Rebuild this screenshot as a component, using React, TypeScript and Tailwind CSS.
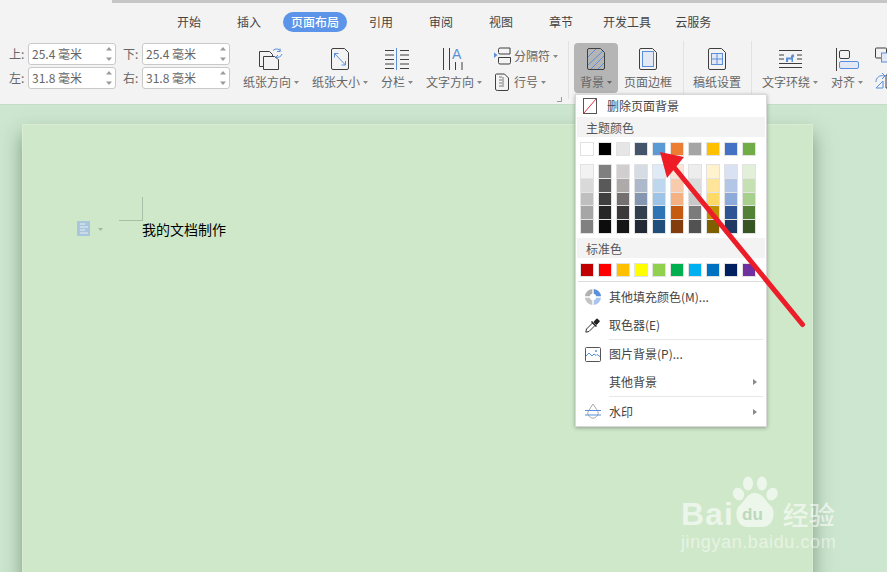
import React from "react";

const FONT = "[font-family:'Noto_Sans_CJK_SC','Noto_Sans',sans-serif]";

const themeRow = ["bg-[#ffffff]","bg-[#000000]","bg-[#e7e6e6]","bg-[#44546a]","bg-[#5b9bd5]","bg-[#ed7d31]","bg-[#a5a5a5]","bg-[#ffc000]","bg-[#4472c4]","bg-[#70ad47]"];
const shades = [
  ["bg-[#f2f2f2]","bg-[#d9d9d9]","bg-[#bfbfbf]","bg-[#a6a6a6]","bg-[#808080]"],
  ["bg-[#7f7f7f]","bg-[#595959]","bg-[#3f3f3f]","bg-[#262626]","bg-[#0d0d0d]"],
  ["bg-[#d0cece]","bg-[#aeaaaa]","bg-[#757070]","bg-[#3a3838]","bg-[#171616]"],
  ["bg-[#d6dce4]","bg-[#adb9ca]","bg-[#8496b0]","bg-[#323f4f]","bg-[#222a35]"],
  ["bg-[#deebf6]","bg-[#bdd7ee]","bg-[#9dc3e6]","bg-[#2e75b5]","bg-[#1e4e79]"],
  ["bg-[#fbe5d5]","bg-[#f7cbac]","bg-[#f4b183]","bg-[#c55a11]","bg-[#833c0b]"],
  ["bg-[#ededed]","bg-[#dbdbdb]","bg-[#c9c9c9]","bg-[#7b7b7b]","bg-[#525252]"],
  ["bg-[#fff2cc]","bg-[#fee599]","bg-[#ffd965]","bg-[#bf8f00]","bg-[#7f6000]"],
  ["bg-[#d9e2f3]","bg-[#b4c6e7]","bg-[#8eaadb]","bg-[#2f5496]","bg-[#1f3864]"],
  ["bg-[#e2efd9]","bg-[#c5e0b3]","bg-[#a8d08d]","bg-[#538135]","bg-[#375623]"],
];
const standard = ["bg-[#c00000]","bg-[#ff0000]","bg-[#ffc000]","bg-[#ffff00]","bg-[#92d050]","bg-[#00b050]","bg-[#00b0f0]","bg-[#0070c0]","bg-[#002060]","bg-[#7030a0]"];

const tabs: [string, string][] = [
  ["开始", "ml-[177px]"],
  ["插入", "ml-[36px]"],
  ["页面布局", "ml-[22px] h-[20px] px-2 rounded-full bg-[#5b94e8] text-white font-medium flex items-center"],
  ["引用", "ml-[22px]"],
  ["审阅", "ml-[36px]"],
  ["视图", "ml-[36px]"],
  ["章节", "ml-[36px]"],
  ["开发工具", "ml-[30px]"],
  ["云服务", "ml-[24px]"],
];

const Caret = ({ c = "#888" }: { c?: string }) => (
  <svg width="5" height="3" viewBox="0 0 5 3" className="ml-[3px] shrink-0"><path d="M0 0h5L2.5 3z" fill={c} /></svg>
);

const MarginField = ({ label, value }: { label: string; value: string }) => (
  <div className="flex items-center h-[21px]">
    <span className="w-[19px] text-[12px] text-[#666]">{label}</span>
    <div className="w-[88px] h-[22px] bg-white border border-[#c9c9c9] rounded-[3px] flex items-center justify-between pl-[3px] pr-[3px]">
      <span className="text-[12px] text-[#666] whitespace-nowrap">{value}</span>
      <svg width="6" height="16" viewBox="0 0 6 16"><path d="M0 4.5 3 1l3 3.5zM0 11.500h6L3 15z" fill="#9a9a9a" /></svg>
    </div>
  </div>
);

const S = "#3f3f3f";
const B = "#5b8fd9";

const Page = ({ x, y, w, h }: { x: number; y: number; w: number; h: number }) => (
  <path d={`M${x + 1.5} ${y}H${x + w - 4}L${x + w} ${y + 4}V${y + h - 1.5}Q${x + w} ${y + h} ${x + w - 1.5} ${y + h}H${x + 1.5}Q${x} ${y + h} ${x} ${y + h - 1.5}V${y + 1.5}Q${x} ${y} ${x + 1.5} ${y}Z`} fill="none" stroke={S} />
);

const OrientIcon = () => (
  <svg width="26" height="24" viewBox="0 0 26 24" fill="none">
    <path d="M1.500 4.500h10l3 3v12h-13z" stroke={S} fill="#f3f3f3" />
    <path d="M5.500 9.500h11l4 3v10h-15z" stroke={S} fill="#f3f3f3" />
    <path d="M15 3.500a5 5 0 0 1 8 1M24 7a5 5 0 0 1-6 3M22 1.500v3h-3M20 8l-2 2 2 2" stroke={B} />
  </svg>
);
const SizeIcon = () => (
  <svg width="20" height="24" viewBox="0 0 20 24">
    <Page x={1.5} y={1.5} w={17} h={21} />
    <path d="M4.500 6.500 15.500 18M4.500 6.500v4M4.500 6.500h4M15.500 18v-4M15.500 18h-4" stroke={B} fill="none" />
  </svg>
);
const ColumnIcon = () => (
  <svg width="24" height="22" viewBox="0 0 24 22" fill="none">
    <path d="M0 2.500h9M0 7h9M0 11.500h9M0 16h9M0 20.500h9M15 2.500h9M15 7h9M15 11.500h9M15 16h9M15 20.500h9" stroke={S} />
    <path d="M11.500 0v22" stroke={B} />
  </svg>
);
const TextDirIcon = () => (
  <svg width="24" height="24" viewBox="0 0 24 24" fill="none">
    <path d="M1.500 1v22M7.500 1v22M13.500 15v8M20 15v8" stroke={S} />
    <text x="10" y="12" fontSize="14" fill={B} fontFamily="Liberation Sans, sans-serif">A</text>
  </svg>
);
const BreakIcon = () => (
  <svg width="18" height="18" viewBox="0 0 18 18" fill="none">
    <path d="M0 5.500 3.500 8 0 11z" fill={B} />
    <path d="M4.500 2.500Q4.500 1 6 1h10v6H6Q4.500 7 4.500 5.500z M4.500 10.500H16.500V15.500Q16.500 17 15 17H6Q4.500 17 4.500 15.500z" stroke={S} />
  </svg>
);
const LineNoIcon = () => (
  <svg width="15" height="18" viewBox="0 0 15 18" fill="none">
    <path d="M1.500 1h8l4 4v11q0 1.500-1.500 1.500H2.500Q.5 17.500.5 16V2Q.5 1 1.500 1z" stroke={S} />
    <path d="M4 4h3M4 7h3M4 10h3M4 13h3M8 4v10" stroke="#777" />
  </svg>
);
const BackgroundIcon = () => (
  <svg width="20" height="24" viewBox="0 0 20 24" fill="none">
    <Page x={1.5} y={1.500} w={17} h={21} />
    <path d="M2 10 10 2M2 18 17 4M5 22 18 9M12 22l6-6" stroke={B} />
  </svg>
);
const BorderIcon = () => (
  <svg width="20" height="24" viewBox="0 0 20 24" fill="none">
    <Page x={1.5} y={1.5} w={17} h={21} />
    <rect x="4.500" y="4.500" width="11" height="15" fill="#e2e9f5" stroke={B} />
  </svg>
);
const GridIcon = () => (
  <svg width="20" height="24" viewBox="0 0 20 24" fill="none">
    <Page x={1.5} y={1.5} w={17} h={21} />
    <rect x="4.500" y="6.500" width="11" height="11" fill="#e2e9f5" stroke={B} />
    <path d="M4.500 12h11M10 6.500V17.500" stroke={B} />
  </svg>
);
const WrapIcon = () => (
  <svg width="23" height="20" viewBox="0 0 23 20" fill="none">
    <path d="M0 1.500h23M0 18.500h23M0 6h5M18 6h5M0 10h5M18 10h5M0 14.500h23" stroke={S} />
    <path d="M7 13V8.500h5V7l1-1.500h2V8l-1 .500V13h-1.500V10.500H9V13z" fill={B} />
  </svg>
);
const AlignIcon = () => (
  <svg width="23" height="23" viewBox="0 0 23 23" fill="none">
    <path d="M.5 0v23" stroke={S} />
    <rect x="3.500" y="2.500" width="10" height="8" rx="1.500" stroke={S} />
    <rect x="3.500" y="13.500" width="19" height="7" rx="1.500" fill="#e2e9f5" stroke={B} />
  </svg>
);

const Tool = ({ icon, label, caret = true, w, ml, active }: { icon: React.ReactNode; label: string; caret?: boolean; w: string; ml: string; active?: boolean }) => (
  <div className={`${w} ${ml} h-[50px] shrink-0 flex flex-col items-center rounded-[4px] ${active ? "bg-[#b5b5b5]" : ""}`}>
    <div className="h-[29px] flex items-center justify-center pt-[3px]">{icon}</div>
    <div className="h-[20px] flex items-center text-[12px] text-[#666] whitespace-nowrap">
      {label}
      {caret && <Caret c={active ? "#666" : "#888"} />}
    </div>
  </div>
);

const Divider = ({ ml }: { ml: string }) => <div className={`w-px h-[58px] -mt-[2px] bg-[#e2e2e2] shrink-0 ${ml}`} />;

const MenuRow = ({ icon, label, arrow, h = "h-[28px]" }: { icon?: React.ReactNode; label: string; arrow?: boolean; h?: string }) => (
  <div className={`${h} flex items-center text-[12px] text-[#444]`}>
    <div className="w-[33px] flex justify-center">{icon}</div>
    <span className="whitespace-nowrap">{label}</span>
    {arrow && (
      <svg width="4" height="6" viewBox="0 0 4 6" className="ml-auto mr-[9px]"><path d="M0 0l4 3-4 3z" fill="#8a8a8a" /></svg>
    )}
  </div>
);

const Swatches = ({ items }: { items: string[] }) => (
  <div className="grid grid-cols-[repeat(10,14px)] gap-x-[4px] pl-[4px]">
    {items.map((c, i) => (
      <div key={i} className={`h-[14px] border border-[#e2e2e2] ${c}`} />
    ))}
  </div>
);

const FillIcon = () => (
  <svg width="16" height="16" viewBox="0 0 16 16">
    <path d="M7.300 0A8 8 0 0 0 0 7.300h4.700a3.300 3.300 0 0 1 2.600-2.600z" fill="#b0b0b0" />
    <path d="M8.700 0A8 8 0 0 1 16 7.300h-4.700a3.300 3.300 0 0 0-2.600-2.600z" fill="#5b8fd9" />
    <path d="M0 8.700A8 8 0 0 0 7.300 16v-4.700a3.300 3.300 0 0 1-2.600-2.600z" fill="#c4c4c4" />
    <path d="M16 8.700A8 8 0 0 1 8.700 16v-4.700a3.300 3.300 0 0 0 2.600-2.600z" fill="#a9c4ee" />
  </svg>
);
const DropperIcon = () => (
  <svg width="15" height="15" viewBox="0 0 15 15" fill="none">
    <path d="M.8 14.200 1.500 11 7.500 5l2.500 2.500-6 6z" stroke="#333" fill="#fff" />
    <path d="M6.500 3.500 11.500 8.500" stroke="#222" strokeWidth="1.500" />
    <path d="M9 4 11 1.500q1-1 2 0l.8.8q1 1 0 2L11.500 6.500z" fill="#222" stroke="#222" />
  </svg>
);
const PictureIcon = () => (
  <svg width="16" height="15" viewBox="0 0 16 15" fill="none">
    <rect x=".5" y=".5" width="15" height="14" rx="1" stroke="#555" />
    <path d="M1 9l3-3 3 3 2-2 2 1.500 1-1 3 2" stroke={B} />
    <circle cx="11" cy="4" r="1" fill={B} />
  </svg>
);
const WatermarkIcon = () => (
  <svg width="16" height="16" viewBox="0 0 16 16" fill="none">
    <path d="M8 0 4 6a5 5 0 1 0 8 0z" stroke="#a8a8a8" />
    <path d="M0 6.500h16M0 11h16" stroke={B} />
  </svg>
);

export default function App() {
  return (
    <div className={`relative w-[887px] h-[572px] overflow-hidden bg-[#cde6cf] ${FONT}`}>
      {/* ribbon */}
      <div className="h-[105px] bg-[#f3f3f3] border-b border-[#c6dcc6]">
        <div className="ml-[112px] h-[3px] bg-[#c6c6c6]" />
        <div className="h-[38px] flex items-center text-[12px] text-[#444]">
          {tabs.map(([t, c]) => (
            <div key={t} className={`${c} whitespace-nowrap shrink-0`}>{t}</div>
          ))}
        </div>
        <div className="flex pl-[9px] pt-[2px]">
          <div className="flex flex-col gap-[3px] shrink-0">
            <MarginField label="上:" value="25.4 毫米" />
            <MarginField label="左:" value="31.8 毫米" />
          </div>
          <div className="flex flex-col gap-[3px] shrink-0 ml-[7px]">
            <MarginField label="下:" value="25.4 毫米" />
            <MarginField label="右:" value="31.8 毫米" />
          </div>
          <Tool icon={<OrientIcon />} label="纸张方向" w="w-[56px]" ml="ml-[13px]" />
          <Tool icon={<SizeIcon />} label="纸张大小" w="w-[56px]" ml="ml-[13px]" />
          <Tool icon={<ColumnIcon />} label="分栏" w="w-[32px]" ml="ml-[13px]" />
          <Tool icon={<TextDirIcon />} label="文字方向" w="w-[56px]" ml="ml-[13px]" />
          <div className="relative ml-[12px] w-[68px] shrink-0 flex flex-col text-[12px] text-[#666]">
            <div className="h-[26px] flex items-center">
              <BreakIcon />
              <span className="ml-[2px] whitespace-nowrap">分隔符</span>
              <Caret />
            </div>
            <div className="h-[26px] flex items-center pl-[1px]">
              <LineNoIcon />
              <span className="ml-[4px] whitespace-nowrap">行号</span>
              <Caret />
            </div>
            <svg width="5" height="5" viewBox="0 0 5 5" className="absolute left-[63px] top-[54px]"><path d="M4.500 0v4.500H0" fill="none" stroke="#999" /></svg>
          </div>
          <Divider ml="ml-[6px]" />
          <Tool active icon={<BackgroundIcon />} label="背景" w="w-[44px]" ml="ml-[5px]" />
          <Tool icon={<BorderIcon />} label="页面边框" caret={false} w="w-[48px]" ml="ml-[6px]" />
          <Divider ml="ml-[11px]" />
          <Tool icon={<GridIcon />} label="稿纸设置" caret={false} w="w-[48px]" ml="ml-[9px]" />
          <Divider ml="ml-[10px]" />
          <Tool icon={<WrapIcon />} label="文字环绕" w="w-[56px]" ml="ml-[10px]" />
          <Tool icon={<AlignIcon />} label="对齐" w="w-[32px]" ml="ml-[13px]" />
          <div className="ml-[12px] flex flex-col gap-[5px] pt-[4px] shrink-0">
            <svg width="20" height="20" viewBox="0 0 20 20" fill="none">
              <rect x=".5" y="1" width="11" height="10" rx="1" stroke={S} />
              <rect x="6.500" y="6" width="12" height="9" fill="#e2e9f5" stroke={B} />
            </svg>
            <svg width="20" height="18" viewBox="0 0 20 18" fill="none">
              <path d="M1 10a6 6 0 0 1 8-6M7 1l3 3-3 3M1 16l7-7v7z" stroke={B} />
              <path d="M11 3h8v13h-8z" stroke={S} />
            </svg>
          </div>
        </div>
      </div>

      {/* document page */}
      <div className="ml-[22px] mt-[19px] w-[791px] h-[470px] bg-[#cfe8ca] border border-[#dbecd4] shadow-[0_10px_18px_rgba(40,80,50,0.5)] text-black">
        <div className="ml-[96px] mt-[72px] w-[24px] h-[24px] border-r border-b border-[#a7bfa6]" />
        <div className="flex items-center h-[20px] ml-[54px] -mt-[2px]">
          <svg width="13" height="15" viewBox="0 0 13 15" className="mt-[-1px]">
            <rect width="13" height="15" fill="#a9c6dc" />
            <path d="M3 3h5M3 6h8M3 9h5M3 12h8" stroke="#e8f1f4" />
          </svg>
          <svg width="5" height="3" viewBox="0 0 5 3" className="ml-[8px]"><path d="M0 0h5L2.500 3z" fill="#9fb7a6" /></svg>
          <span className="ml-[39px] text-[14px] whitespace-nowrap">我的文档制作</span>
        </div>
      </div>

      {/* dropdown menu */}
      <div className="absolute left-[575px] top-[94px] w-[192px] h-[333px] bg-white border border-[#d8d8d8] shadow-[0_1px_4px_rgba(0,0,0,0.3)]">
        <div className="h-[22px] flex items-center text-[12px] text-[#444]">
          <svg width="14" height="16" viewBox="0 0 14 16" fill="none" className="ml-[7px] mr-[10px]">
            <rect x=".5" y=".5" width="13" height="15" stroke="#555" />
            <path d="M1 15 13 1" stroke="#d9363e" />
          </svg>
          <span>删除页面背景</span>
        </div>
        <div className="h-[20px] mx-px bg-[#f3f3f3] pl-[9px] pt-[2px] flex items-center text-[12px] text-[#555]">主题颜色</div>
        <div className="pt-[5px]"><Swatches items={themeRow} /></div>
        <div className="flex gap-[4px] pl-[4px] pt-[8px]">
          {shades.map((col, i) => (
            <div key={i} className="w-[14px] h-[70px] flex flex-col border border-[#e2e2e2]">
              {col.map((c) => <div key={c} className={`flex-1 border-b border-[#e4e4e4] last:border-b-0 ${c}`} />)}
            </div>
          ))}
        </div>
        <div className="mt-[4px] h-[20px] mx-px bg-[#f3f3f3] pl-[9px] pt-[1px] flex items-center text-[12px] text-[#555]">标准色</div>
        <div className="pt-[5px]"><Swatches items={standard} /></div>
        <div className="mt-[4px] mx-[2px] h-px bg-[#dcdcdc]" />
        <MenuRow icon={<FillIcon />} label="其他填充颜色(M)..." h="h-[29px]" />
        <MenuRow icon={<DropperIcon />} label="取色器(E)" />
        <div className="ml-[33px] mr-[3px] h-px bg-[#e8e8e8]" />
        <MenuRow icon={<PictureIcon />} label="图片背景(P)..." />
        <MenuRow label="其他背景" arrow />
        <div className="ml-[33px] mr-[3px] h-px bg-[#e8e8e8]" />
        <MenuRow icon={<WatermarkIcon />} label="水印" arrow h="h-[29px]" />
      </div>

      {/* red annotation arrow */}
      <svg className="absolute left-[640px] top-[140px]" width="180" height="200" viewBox="640 140 180 200" fill="none">
        <path d="M673 166 802.500 324.500" stroke="#ec1c28" strokeWidth="5" strokeLinecap="round" />
        <path d="M660 152 667 178 684 157z" fill="#ee1c25" />
      </svg>

      {/* watermark */}
      <div className="absolute left-[681px] top-[476px] w-[160px] text-white/60">
        <div className="flex items-end h-[52px]">
          <span className="font-['Liberation_Sans',sans-serif] font-bold text-[32px] leading-[28px] tracking-[1px]">Bai</span>
          <svg width="48" height="52" viewBox="0 0 48 52" className="shrink-0 -ml-[2px]">
            <g fill="#ffffff" fillOpacity="0.6">
              <ellipse cx="6.500" cy="18" rx="5.500" ry="6.500" transform="rotate(-25 6.500 18)" />
              <ellipse cx="16" cy="7.500" rx="5" ry="7" />
              <ellipse cx="30" cy="7.500" rx="5" ry="7" />
              <ellipse cx="40" cy="18" rx="5.500" ry="6.500" transform="rotate(25 40 18)" />
              <path d="M23 17c8 0 10 8 16 13 5 5 3 21-8 21H15C4 51 2 35 7 30c6-5 8-13 16-13z" />
            </g>
            <text x="10" y="44" fontSize="17" fontWeight="bold" fill="#bcd9bd" fontFamily="Liberation Sans, sans-serif">du</text>
          </svg>
          <span className="ml-[3px] text-[26px] leading-[28px] font-medium whitespace-nowrap">经验</span>
        </div>
        <div className="mt-[2px] font-['Liberation_Sans',sans-serif] text-[18px] leading-[24px] tracking-[0.6px] whitespace-nowrap text-white/50">jingyan.baidu.com</div>
      </div>
    </div>
  );
}
